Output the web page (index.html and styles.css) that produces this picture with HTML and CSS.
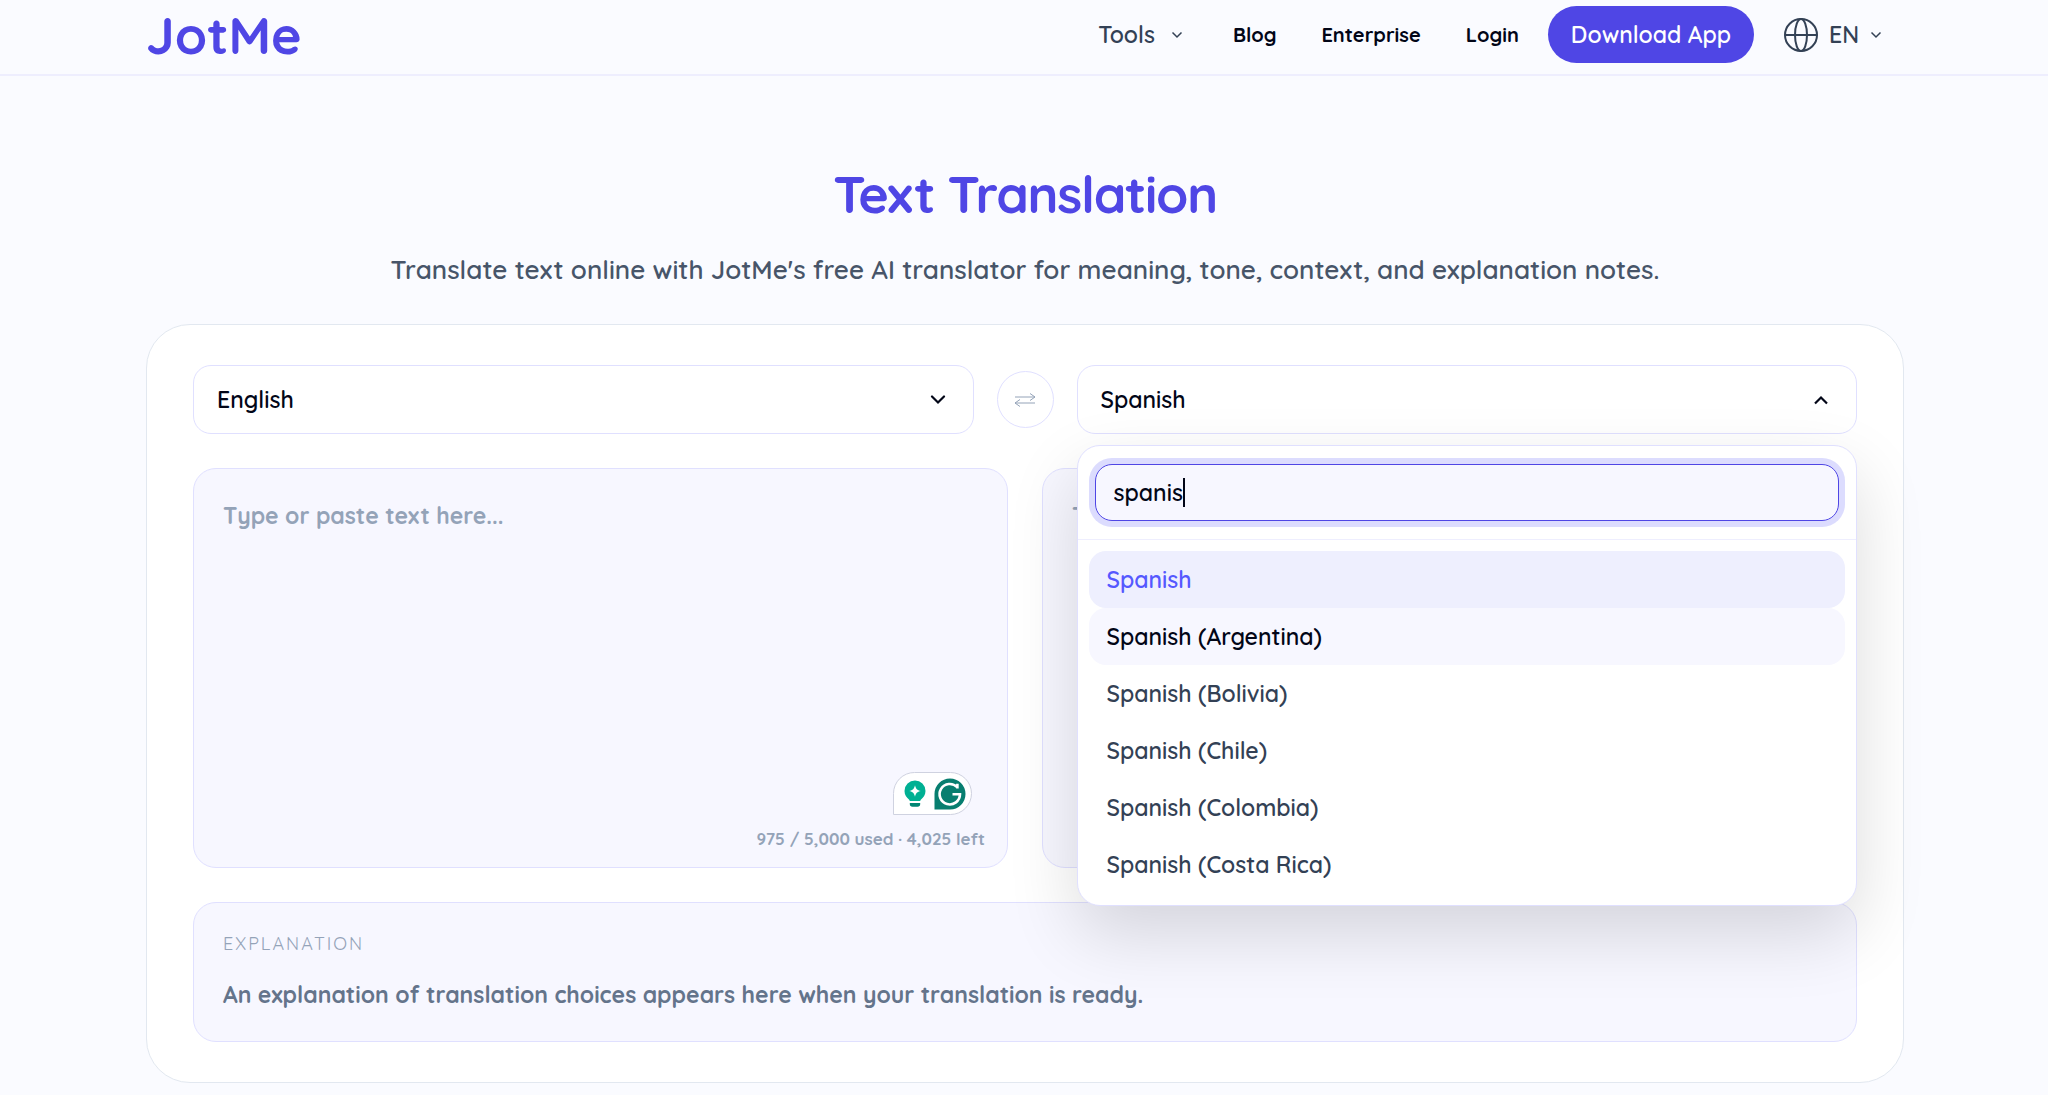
FILE: index.html
```html
<!DOCTYPE html>
<html lang="en">
  <head>
    <meta charset="UTF-8" />
    <meta name="viewport" content="width=device-width, initial-scale=1.0" />
    <title>Text Translation | JotMe</title>
    <link rel="stylesheet" href="styles.css">
  </head>
  <body>
    <header class="site-header">
      <div class="header-inner">
        <a class="logo" href="/">JotMe</a>
        <nav class="nav">
          <button class="nav-menu" type="button" aria-haspopup="true">
            Tools
            <svg class="nav-chevron" viewBox="0 0 12 8" aria-hidden="true">
              <path d="M1.5 1.5 6 6l4.5-4.5" />
            </svg>
          </button>
          <a class="nav-link" href="/blog">Blog</a>
          <a class="nav-link" href="/enterprise">Enterprise</a>
          <a class="nav-link" href="/login">Login</a>
          <a class="download" href="/download">Download App</a>
          <button class="lang-menu" type="button" aria-haspopup="true">
            <svg class="globe" viewBox="0 0 34 34" aria-hidden="true">
              <circle cx="17" cy="17" r="16" />
              <ellipse cx="17" cy="17" rx="6" ry="16" />
              <path d="M1 17h32" />
            </svg>
            EN
            <svg class="nav-chevron" viewBox="0 0 12 8" aria-hidden="true">
              <path d="M1.5 1.5 6 6l4.5-4.5" />
            </svg>
          </button>
        </nav>
      </div>
    </header>

    <main class="page">
      <h1 class="title">Text Translation</h1>
      <p class="subtitle">
        Translate text online with JotMe's free AI translator for meaning, tone,
        context, and explanation notes.
      </p>

      <section class="card">
        <div class="languages">
          <div class="picker">
            <select class="picker-select" id="source" aria-label="Source language">
              <option>English</option>
            </select>
            <svg class="picker-chevron" viewBox="0 0 16 10" aria-hidden="true">
              <path d="M2 1.5 8 7.5l6-6" />
            </svg>
          </div>

          <button class="swap" type="button" aria-label="Swap languages">
            <svg class="swap-icon" viewBox="0 0 22 14" aria-hidden="true">
              <path d="M1 4h20M16 .5 21 4l-5 3.500M21 10H1M6 6.500 1 10l5 3.500" />
            </svg>
          </button>

          <div class="picker">
            <select class="picker-select" id="target" aria-label="Target language">
              <option>Spanish</option>
            </select>
            <svg class="picker-chevron" viewBox="0 0 16 10" aria-hidden="true">
              <path class="sharp" d="M2 8.500 8 2.500l6 6" />
            </svg>

            <div class="dropdown">
              <div class="search">
                <input class="search-input" id="search" type="text" value="spanis" aria-label="Search languages" />
                <span class="caret"></span>
              </div>
              <div class="options" role="listbox" aria-label="Languages">
                <button class="option selected" type="button" role="option" aria-selected="true">Spanish</button>
                <button class="option active" type="button" role="option">Spanish (Argentina)</button>
                <button class="option" type="button" role="option">Spanish (Bolivia)</button>
                <button class="option" type="button" role="option">Spanish (Chile)</button>
                <button class="option" type="button" role="option">Spanish (Colombia)</button>
                <button class="option" type="button" role="option">Spanish (Costa Rica)</button>
              </div>
            </div>
          </div>
        </div>

        <div class="panes">
          <div class="pane">
            <textarea class="pane-text" id="input" placeholder="Type or paste text here..." aria-label="Text to translate"></textarea>
            <p class="counter">975 / 5,000 used · 4,025 left</p>
            <div class="assistant">
              <svg class="bulb" viewBox="0 0 22 28" aria-hidden="true">
                <path fill="#00b093" d="M11 .5A10.500 10.500 0 0 0 .5 11c0 4 2.200 6.600 4.200 8.300.6.500.9 1.200 1.100 1.700h10.400c.2-.5.500-1.200 1.100-1.700 2-1.700 4.200-4.300 4.200-8.300A10.500 10.500 0 0 0 11 .5Z" />
                <path fill="#fff" d="M11 5.200c.9 3.700 2.100 4.900 5.800 5.800-3.700.9-4.900 2.100-5.800 5.800-.9-3.700-2.100-4.900-5.800-5.800 3.700-.9 4.900-2.100 5.800-5.800Z" />
                <path fill="#008573" d="M5.800 23h10.400v1a2.700 2.700 0 0 1-2.700 2.700h-5A2.700 2.700 0 0 1 5.800 24Z" />
              </svg>
              <svg class="badge" viewBox="0 0 32 32" aria-hidden="true">
                <path fill="#077e6f" d="M16 .5A15.500 15.500 0 0 1 16 31.500H.5V16A15.500 15.500 0 0 1 16 .5Z" />
                <path fill="none" stroke="#fff" stroke-width="2.600" d="M23.200 9.200A10.200 10.200 0 1 0 26 16.300h-7.500M23.400 5.800v4.600" />
              </svg>
            </div>
          </div>
          <div class="pane">
            <textarea class="pane-text" id="output" placeholder="Translation" aria-label="Translation" readonly></textarea>
          </div>
        </div>

        <div class="explanation">
          <h2 class="explanation-title">EXPLANATION</h2>
          <p class="explanation-text">
            An explanation of translation choices appears here when your
            translation is ready.
          </p>
        </div>
      </section>
    </main>
  </body>
</html>
```
FILE: styles.css
```css
* {
  box-sizing: border-box;
}
body {
  margin: 0;
  font-family: "Quicksand", "Inter", sans-serif;
  font-size: 23px;
  font-weight: 600;
  line-height: 34px;
  background-color: #fafbff;
  color: #020617;
}
button,
input,
select,
textarea {
  font: inherit;
  color: inherit;
}
button {
  border: none;
  background: none;
  padding: 0;
  cursor: pointer;
}
a {
  color: inherit;
  text-decoration: none;
}
h1,
h2,
p {
  margin: 0;
}

/* header */
.site-header {
  padding: 6px 145px 11px;
  border-bottom: 2px solid #eeeefe;
}
.header-inner {
  display: flex;
  align-items: center;
  justify-content: space-between;
  max-width: 1758px;
  margin: 0 auto;
}
.logo {
  padding-left: 1px;
  font-size: 52px;
  font-weight: 700;
  line-height: 57px;
  color: #4f46e5;
}
.nav {
  display: flex;
  align-items: center;
}
.nav-menu,
.lang-menu {
  display: flex;
  align-items: center;
  color: #334155;
}
.nav-menu {
  gap: 16px;
  padding: 0 28px 0 23px;
}
.nav-link {
  padding: 0 23px 0 22px;
  font-size: 20px;
  font-weight: 700;
}
.download {
  margin-left: 6px;
  padding: 0 23px;
  border-radius: 29px;
  line-height: 57px;
  background-color: #4f46e5;
  color: #fff;
}
.lang-menu {
  gap: 11px;
  padding: 0 21px 0 30px;
}
.nav-chevron {
  width: 12px;
  height: 8px;
  fill: none;
  stroke: currentColor;
  stroke-width: 1.5;
}
.globe {
  width: 34px;
  height: 34px;
  fill: none;
  stroke: currentColor;
  stroke-width: 2;
}

/* page */
.page {
  max-width: 2048px;
  margin: 0 auto;
  padding: 89px 144px 12px 146px;
}
.title {
  font-size: 52px;
  font-weight: 700;
  line-height: 58px;
  letter-spacing: -0.025em;
  text-align: center;
  color: #4f46e5;
}
.subtitle {
  margin: 28px 0 35px;
  font-size: 26px;
  line-height: 38px;
  text-align: center;
  color: #475569;
}
.card {
  display: flex;
  flex-direction: column;
  gap: 34px;
  padding: 40px 46px;
  border: 1px solid #e2e8f0;
  border-radius: 44px;
  background-color: #fff;
}

/* language pickers */
.languages {
  display: flex;
  align-items: center;
  gap: 23px;
}
.picker {
  position: relative;
  display: flex;
  flex: 1;
  align-items: center;
}
.picker-select {
  flex: 1;
  height: 69px;
  padding: 0 23px;
  border: 1px solid #e0e0ff;
  border-radius: 18px;
  appearance: none;
  background-color: #fff;
}
.picker-chevron {
  position: absolute;
  right: 28px;
  width: 16px;
  height: 10px;
  fill: none;
  stroke: #020617;
  stroke-width: 2.2;
  stroke-linecap: round;
  pointer-events: none;
}
.picker-chevron .sharp {
  stroke-linecap: butt;
}
.swap {
  display: flex;
  align-items: center;
  justify-content: center;
  width: 57px;
  height: 57px;
  border: 1px solid #e0e0ff;
  border-radius: 50%;
}
.swap-icon {
  width: 22px;
  height: 14px;
  fill: none;
  stroke: #94a3b8;
  stroke-width: 1;
}
.dropdown {
  position: absolute;
  top: calc(100% + 11px);
  left: 0;
  right: 0;
  z-index: 10;
  border: 1px solid #e0e0ff;
  border-radius: 23px;
  background-color: #fff;
  box-shadow: 0 28px 70px rgba(0, 0, 0, 0.14);
}
.search {
  position: relative;
  display: flex;
  padding: 18px 17px;
  border-bottom: 1px solid #eeeefe;
}
.search-input {
  flex: 1;
  height: 57px;
  padding: 0 18px;
  border: 1px solid #4f46e5;
  border-radius: 17px;
  outline: none;
  background-color: #f7f7ff;
  box-shadow: 0 0 0 6px #dcdcfe;
}
.caret {
  position: absolute;
  top: 32px;
  left: 105px;
  width: 2px;
  height: 29px;
  background-color: #020617;
}
.options {
  display: flex;
  flex-direction: column;
  padding: 11px 11px 12px;
}
.option {
  height: 57px;
  padding: 0 18px;
  border-radius: 17px;
  text-align: left;
  color: #334155;
}
.option.selected {
  background-color: #eeeffe;
  color: #5558ff;
}
.option.active {
  background-color: #f7f7ff;
  color: #020617;
}

/* text panes */
.panes {
  display: grid;
  grid-template-columns: 1fr 1fr;
  gap: 34px;
}
.pane {
  position: relative;
  display: flex;
  flex-direction: column;
  min-height: 400px;
  border: 1px solid #e0e0ff;
  border-radius: 23px;
  background-color: #f7f7ff;
}
.pane-text {
  flex: 1;
  padding: 30px 29px;
  border: none;
  outline: none;
  resize: none;
  background: none;
  font-weight: 700;
}
.pane-text::placeholder {
  color: #94a3b8;
}
.counter {
  padding: 0 22px 16px;
  font-size: 17px;
  font-weight: 700;
  line-height: 24px;
  text-align: right;
  color: #94a3b8;
}
.assistant {
  position: absolute;
  right: 35px;
  bottom: 52px;
  display: flex;
  align-items: center;
  gap: 8px;
  height: 43px;
  padding: 0 5px 0 10px;
  border: 1px solid #cfd2e0;
  border-radius: 22px 22px 22px 0;
  background-color: #fff;
}
.bulb {
  width: 22px;
  height: 28px;
}
.badge {
  width: 32px;
  height: 32px;
}

/* explanation */
.explanation {
  display: flex;
  flex-direction: column;
  gap: 22px;
  padding: 29px;
  border: 1px solid #e0e0ff;
  border-radius: 23px;
  background-color: #f7f7ff;
}
.explanation-title {
  font-size: 18px;
  font-weight: 400;
  line-height: 24px;
  letter-spacing: 2px;
  color: #94a3b8;
}
.explanation-text {
  font-weight: 700;
  color: #64748b;
}
```
